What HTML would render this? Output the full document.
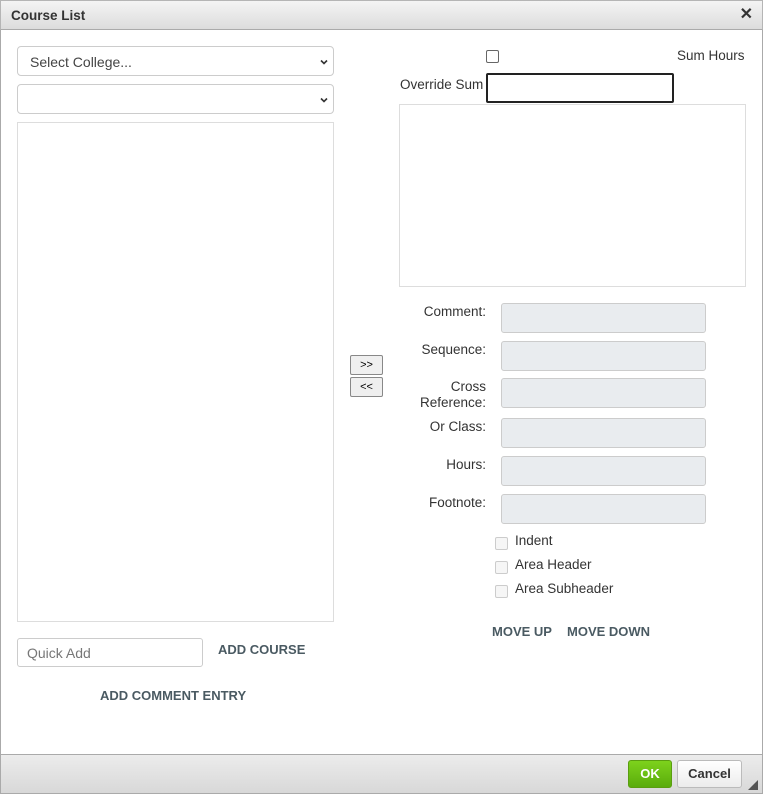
<!DOCTYPE html>
<html><head><meta charset="utf-8"><style>
*{box-sizing:border-box;margin:0;padding:0}
body{width:763px;height:794px;background:#fff;font-family:"Liberation Sans",Arial,sans-serif;font-size:13px;color:#333;position:relative;overflow:hidden}
.a{position:absolute}
.title{left:0;top:0;width:763px;height:30px;background:linear-gradient(#f4f4f4,#dcdcdc);border:1px solid #b5b5b5;border-bottom:1px solid #aaa}
.title span{position:absolute;left:10px;top:7px;font-weight:600;font-size:13.5px;color:#333}
.x{right:10px;top:4px;font-weight:bold;font-size:16px;color:#333}
.frame{left:0;top:30px;width:763px;height:724px;border-left:1px solid #aaa;border-right:1px solid #aaa}
.sel{border:1px solid #ccc;border-radius:4px;background:#fff;height:30px;width:317px;left:17px}
.sel span{position:absolute;left:12px;top:7px;font-size:14px;color:#444}
.chev{position:absolute;right:5px;top:11px;width:8px;height:8px}
.box{border:1px solid #ddd}
.gin{left:501px;width:205px;height:30px;background:#e9ecef;border:1px solid #ccc;border-radius:3px}
.lbl{width:110px;left:376px;text-align:right;font-size:13.5px;color:#333;line-height:16px}
.cb{width:13px;height:13px;border:1px solid #ccc;border-radius:2px;background:#f6f6f6;left:495px}
.cl{left:515px;font-size:13.5px;color:#333}
.btn{left:350px;width:33px;height:20px;border:1px solid #888;border-radius:2px;background:#efefef;font-size:11px;text-align:center;line-height:18px;color:#000}
.link{font-weight:bold;color:#4a5a62;font-size:13px}
.foot{left:0;top:754px;width:763px;height:40px;background:linear-gradient(#ececec,#d8d8d8);border:1px solid #aaa}
</style></head><body>
<div class="a frame"></div>
<div class="a title"><span>Course List</span></div>
<div class="a x">✕</div>
<div class="a sel" style="top:46px"><span>Select College...</span><svg class="chev" viewBox="0 0 8 8"><path d="M1 2.5L4 5.5L7 2.5" stroke="#333" stroke-width="1.6" fill="none"/></svg></div>
<div class="a sel" style="top:84px"><svg class="chev" viewBox="0 0 8 8"><path d="M1 2.5L4 5.5L7 2.5" stroke="#333" stroke-width="1.6" fill="none"/></svg></div>
<div class="a box" style="left:17px;top:122px;width:317px;height:500px"></div>
<div class="a" style="left:17px;top:638px;width:186px;height:29px;border:1px solid #ccc;border-radius:3px"><span style="position:absolute;left:9px;top:6px;font-size:14px;color:#777">Quick Add</span></div>
<div class="a link" style="left:218px;top:642px">ADD COURSE</div>
<div class="a link" style="left:100px;top:688px">ADD COMMENT ENTRY</div>

<div class="a" style="left:486px;top:50px;width:13px;height:13px;border:1px solid #666;border-radius:2px"></div>
<div class="a" style="left:677px;top:48px;font-size:13.5px">Sum Hours</div>
<div class="a" style="left:400px;top:77px;font-size:13.5px">Override Sum</div>
<div class="a" style="left:486px;top:73px;width:188px;height:30px;border:2px solid #222;border-radius:2px"></div>
<div class="a box" style="left:399px;top:104px;width:347px;height:183px"></div>

<div class="a btn" style="top:355px">&gt;&gt;</div>
<div class="a btn" style="top:377px">&lt;&lt;</div>

<div class="a lbl" style="top:304px">Comment:</div><div class="a gin" style="top:303px"></div>
<div class="a lbl" style="top:342px">Sequence:</div><div class="a gin" style="top:341px"></div>
<div class="a lbl" style="top:379px">Cross<br>Reference:</div><div class="a gin" style="top:378px"></div>
<div class="a lbl" style="top:419px">Or Class:</div><div class="a gin" style="top:418px"></div>
<div class="a lbl" style="top:457px">Hours:</div><div class="a gin" style="top:456px"></div>
<div class="a lbl" style="top:495px">Footnote:</div><div class="a gin" style="top:494px"></div>

<div class="a cb" style="top:537px"></div><div class="a cl" style="top:533px">Indent</div>
<div class="a cb" style="top:561px"></div><div class="a cl" style="top:557px">Area Header</div>
<div class="a cb" style="top:585px"></div><div class="a cl" style="top:581px">Area Subheader</div>
<div class="a link" style="left:492px;top:624px">MOVE UP</div>
<div class="a link" style="left:567px;top:624px">MOVE DOWN</div>

<div class="a foot"></div>
<div class="a" style="left:628px;top:760px;width:44px;height:28px;background:linear-gradient(#7dd21c,#5aac0c);border:1px solid #5a9e10;border-radius:3px;color:#fff;font-weight:bold;text-align:center;line-height:26px;font-size:13px">OK</div>
<div class="a" style="left:677px;top:760px;width:65px;height:28px;background:linear-gradient(#fff,#ececec);border:1px solid #bbb;border-radius:3px;color:#333;font-weight:bold;text-align:center;line-height:26px;font-size:13px">Cancel</div>
<svg class="a" style="left:748px;top:780px" width="10" height="10"><path d="M10 0L10 10L0 10Z" fill="#555"/></svg>
</body></html>
